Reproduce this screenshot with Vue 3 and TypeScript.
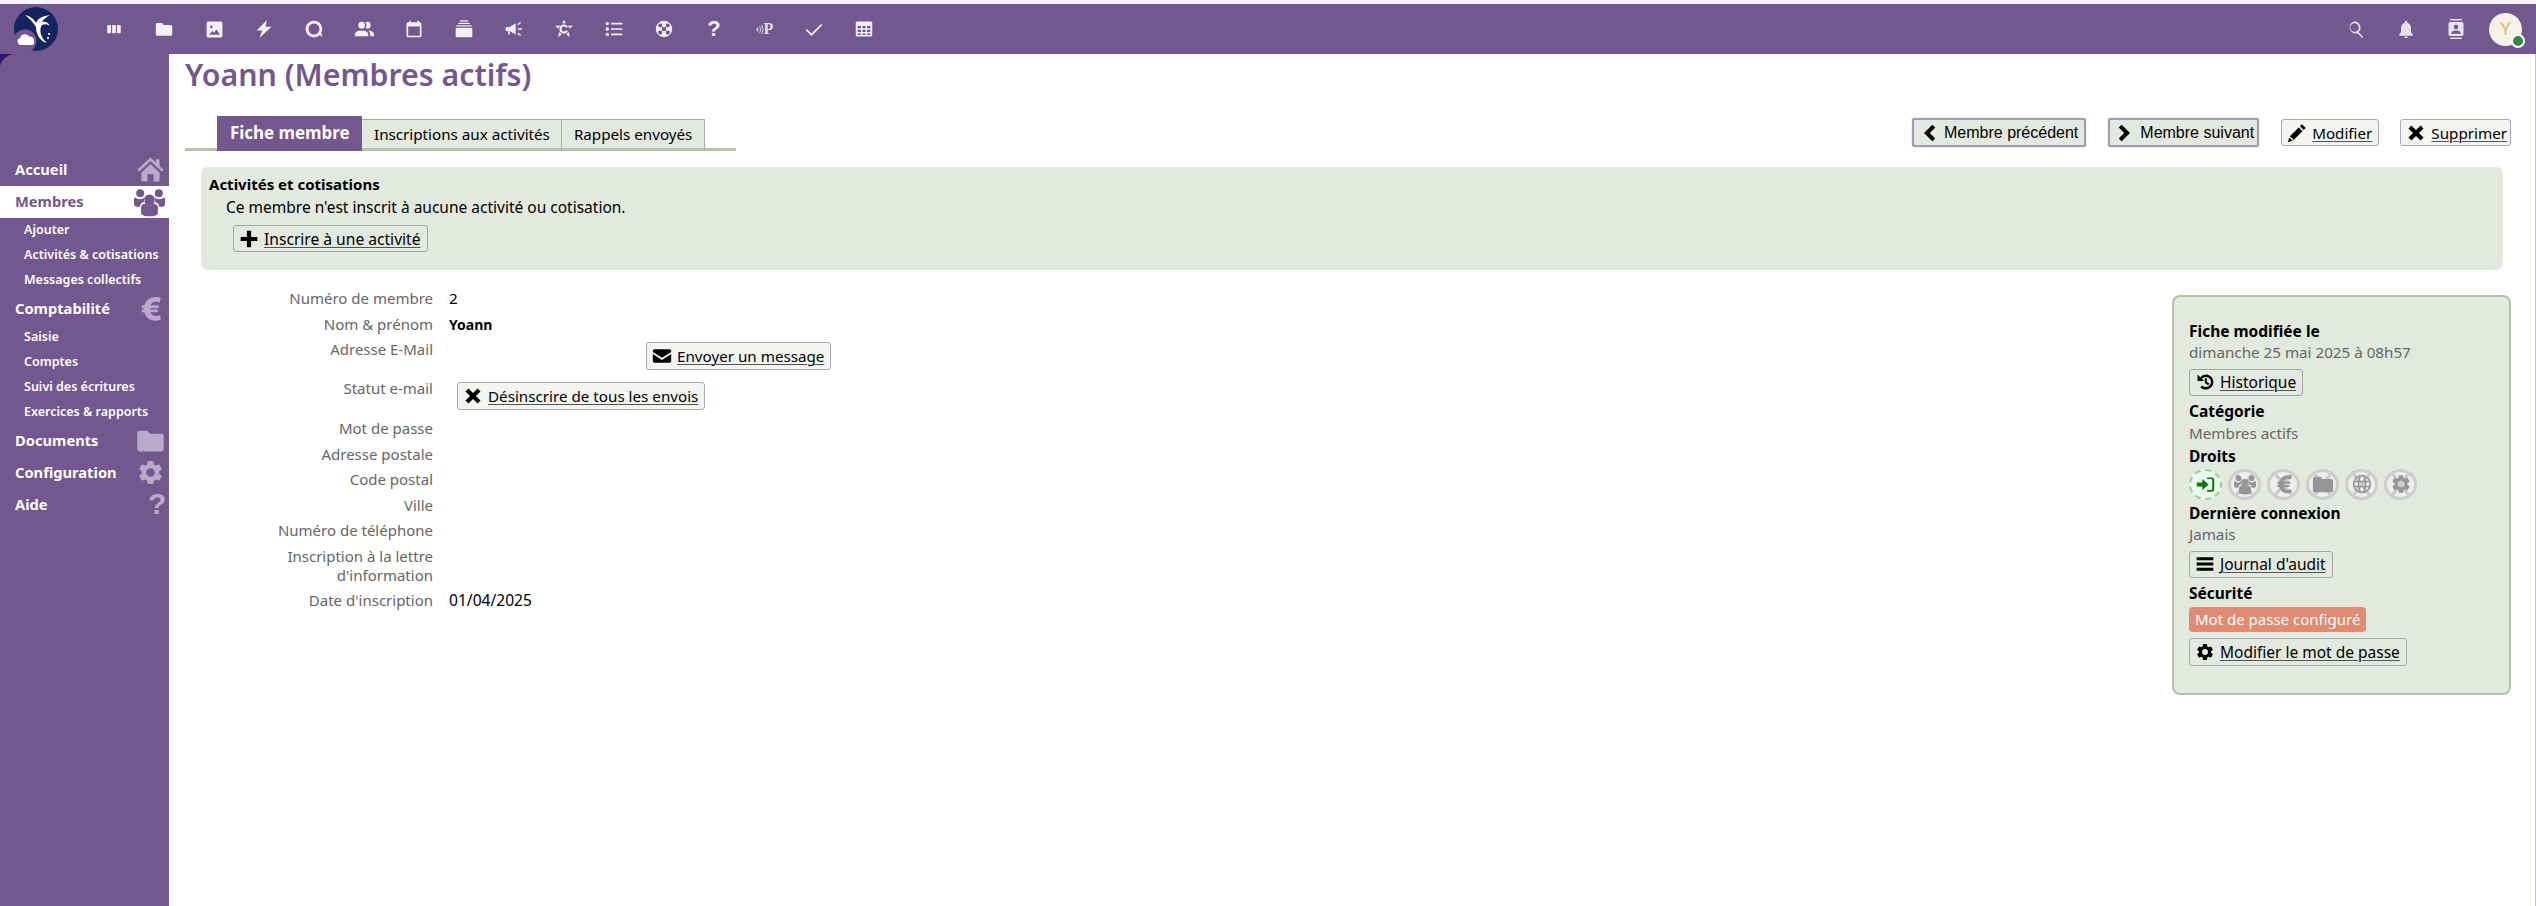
<script setup lang="ts">
const P: Record<string, string> = {
  apps: 'M4 6.500h3a1 1 0 011 1v9a1 1 0 01-1 1H4a1 1 0 01-1-1v-9a1 1 0 011-1zM10.500 6.500h3a1 1 0 011 1v9a1 1 0 01-1 1h-3a1 1 0 01-1-1v-9a1 1 0 011-1zM17 6.500h3a1 1 0 011 1v9a1 1 0 01-1 1h-3a1 1 0 01-1-1v-9a1 1 0 011-1z',
  folder: 'M3 4h6.500l2 2.500H21a2 2 0 012 2V19a2 2 0 01-2 2H3a2 2 0 01-2-2V6a2 2 0 012-2z',
  image: 'M4 2h16a2 2 0 012 2v16a2 2 0 01-2 2H4a2 2 0 01-2-2V4a2 2 0 012-2zM8 7a1.700 1.700 0 100 3.400A1.700 1.700 0 008 7zM5 18.500h14l-4.500-6.500-3.200 4.200-2-2.300z',
  flash: 'M16 0L2 14h7.500L6 24l16-15h-8z',
  talk: 'M12 2a10 10 0 107 17.100l3 2.400-1.200-5A10 10 0 0012 2zm0 3.400a6.600 6.600 0 110 13.200 6.600 6.600 0 010-13.200z',
  people: 'M16 17v2H2v-2s0-4 7-4 7 4 7 4m-3.500-9.500A3.500 3.500 0 109 11a3.500 3.500 0 003.500-3.500m3.440 5.500A5.320 5.320 0 0118 17v2h4v-2s0-3.630-6.060-4M15 4a3.390 3.390 0 00-1.930.59 5 5 0 010 5.820A3.390 3.390 0 0015 11a3.500 3.500 0 000-7z',
  calendar: 'M19 4h-1V2h-2v2H8V2H6v2H5a2 2 0 00-2 2v14a2 2 0 002 2h14a2 2 0 002-2V6a2 2 0 00-2-2zm0 16H5V9h14v11z',
  deck: 'M7 1.500h10V3H7zM5 4.500h14V6H5zM3 7.500h18V9H3zM3 10.500h18a1 1 0 011 1V22H2V11.500a1 1 0 011-1z',
  announce: 'M2 9.500h5L14 5v14l-7-4.500v4H5v-4H2zM16.500 11h5v2h-5zM16 6l3.500-2.500 1 1.400L17 7.600zM16 18l3.500 2.500 1-1.400-3.500-2.500z',
  circles: 'M12 1l2.200 4h-4.400zM1 8l6.300-.2-1.800 3.600zM23 8l-6.300-.2 1.800 3.600zM5 22l1.300-6.300 3 2.700zM19 22l-1.300-6.300-3 2.700zM12 6.500a5.500 5.500 0 104.800 8.200l-2.200-1.100A3 3 0 1112 9a3 3 0 012.600 1.400l2.200-1.100A5.500 5.500 0 0012 6.500z',
  list: 'M2 5.500a2 2 0 114 0 2 2 0 01-4 0zM2 12a2 2 0 114 0 2 2 0 01-4 0zM2 18.500a2 2 0 114 0 2 2 0 01-4 0zM8.500 4.500H22v2H8.500zM8.500 11H22v2H8.500zM8.500 17.500H22v2H8.500z',
  buoy: 'M12 1a11 11 0 100 22 11 11 0 000-22zM12 9a3 3 0 110 6 3 3 0 010-6zM7 4.500a2.700 2.700 0 110 5.400 2.700 2.700 0 010-5.400zM17 4.500a2.700 2.700 0 110 5.400 2.700 2.700 0 010-5.400zM7 14.100a2.700 2.700 0 110 5.400 2.700 2.700 0 010-5.400zM17 14.100a2.700 2.700 0 110 5.400 2.700 2.700 0 010-5.400z',
  check: 'M9 17.500L3.500 12l-1.500 1.500L9 20.500 22 7.500 20.500 6z',
  table: 'M3 2h18a2 2 0 012 2v16a2 2 0 01-2 2H3a2 2 0 01-2-2V4a2 2 0 012-2zM3.500 8v3h4.500V8zm6.500 0v3h4V8zm6 0v3h4.500V8zM3.500 13v3h4.500v-3zm6.500 0v3h4v-3zm6 0v3h4.500v-3zM3.500 18v2h4.500v-2zm6.500 0v2h4v-2zm6 0v2h4.500v-2z',
  search: 'M10 2a8 8 0 015.300 14l6.500 6.500-1.500 1.500-6.500-6.500A8 8 0 1110 2zm0 2.200a5.800 5.800 0 100 11.600 5.800 5.800 0 000-11.600z',
  bell: 'M12 23a2.500 2.500 0 002.400-2h-4.800A2.500 2.500 0 0012 23zm8-5l-2-2v-5c0-3.200-1.700-5.800-4.500-6.500V3.500a1.500 1.500 0 00-3 0v1C7.700 5.200 6 7.800 6 11v5l-2 2v2h16z',
  contact: 'M5 0h14v1.800H5zM5 22.200h14V24H5zM5 3.500h14a2 2 0 012 2v13a2 2 0 01-2 2H5a2 2 0 01-2-2v-13a2 2 0 012-2zM12 6.800a2.800 2.800 0 100 5.600 2.800 2.800 0 000-5.600zM6.500 17.800h11v-1.300c0-1.800-3.700-2.800-5.500-2.800s-5.500 1-5.500 2.800z',
  home: 'M12 2L1 12.300l1.500 1.600L12 5l9.500 8.900 1.500-1.600-3.500-3.300V3.500h-3v2.700zM4.500 14.500L12 7.500l7.500 7V22H14.500v-6h-5v6h-5z',
  users: 'M12 6.500a4.300 4.300 0 110 8.600 4.300 4.300 0 010-8.600zM4.800 2.500a3.100 3.100 0 110 6.200 3.100 3.100 0 010-6.200zM19.200 2.500a3.100 3.100 0 110 6.200 3.100 3.100 0 010-6.200zM5.500 16.500c0-2 2-2.800 3.300-2.500a5.500 5.500 0 006.400 0c1.300-.3 3.300.5 3.300 2.500V21c0 1.500-3 2.500-6.500 2.500S5.500 22.500 5.500 21zM0 9.500C0 9 1 9 1.500 9.300a5.300 5.300 0 006 0c.4.500.6 1.700 1.100 2.700-2.300.5-4 1.800-4 4H2C.5 16 0 15 0 14zM24 9.500c0-.5-1-.5-1.500-.2a5.300 5.300 0 01-6 0c-.4.500-.6 1.700-1.100 2.700 2.300.5 4 1.800 4 4H22c1.500 0 2-1 2-2z',
  euro: 'M16.500 2.500c1.500 0 3 .3 4 .7l-.8 3.800a9 9 0 00-3.200-.6c-2.200 0-3.800 1-4.500 3h7l-.5 2.300h-7v1.200h6.700l-.5 2.300H12c.7 2.100 2.400 3.100 4.600 3.100 1.200 0 2.400-.3 3.300-.7l.6 3.700a12 12 0 01-4.500.9c-4.500 0-8-2.500-9-7H4.500l.5-2.300h1.500v-1.200H4.500l.5-2.300h2c1.100-4.400 4.700-6.900 9.500-6.900z',
  gear: 'M19.140 12.940c.04-.3.06-.61.06-.94 0-.32-.02-.64-.07-.94l2.030-1.580a.49.49 0 00.12-.61l-1.920-3.320a.488.488 0 00-.59-.22l-2.390.96c-.5-.38-1.030-.7-1.620-.94l-.36-2.540a.484.484 0 00-.48-.41h-3.840c-.24 0-.43.17-.47.41l-.36 2.540c-.59.24-1.130.57-1.620.94l-2.390-.96c-.22-.08-.47 0-.59.22L2.740 8.870c-.12.21-.08.47.12.61l2.030 1.580c-.05.3-.09.63-.09.94s.02.64.07.94l-2.030 1.580a.49.49 0 00-.12.61l1.920 3.320c.12.22.37.29.59.22l2.390-.96c.5.38 1.030.7 1.620.94l.36 2.540c.05.24.24.41.48.41h3.840c.24 0 .44-.17.47-.41l.36-2.540c.59-.24 1.130-.56 1.620-.94l2.390.96c.22.08.47 0 .59-.22l1.920-3.320c.12-.22.07-.47-.12-.61l-2.010-1.580zM12 15.600A3.600 3.600 0 1112 8.400a3.600 3.600 0 010 7.200z',
  chevL: 'M16 2l3.500 3.500L13 12l6.500 6.500L16 22 6 12z',
  chevR: 'M8 2L4.500 5.500 11 12l-6.500 6.500L8 22l10-10z',
  pencil: 'M18 1.500l4.500 4.500-2.500 2.500L15.500 4zM14 5.500l4.500 4.500L8 20.500 3.500 16zM2.800 17.500l3.700 3.700L1 23z',
  cross: 'M6.500 3L12 8.500 17.500 3 21 6.500 15.500 12l5.500 5.500-3.500 3.500L12 15.500 6.500 21 3 17.500 8.500 12 3 6.500z',
  plus: 'M9.500 2h5v7.500H22v5h-7.500V22h-5v-7.500H2v-5h7.500z',
  mail: 'M3 4h18a2 2 0 012 2v1.200l-11 7-11-7V6a2 2 0 012-2zM1 9.700l11 7 11-7V18a2 2 0 01-2 2H3a2 2 0 01-2-2z',
  history: 'M13 3a9 9 0 11-6.500 15.200l2-2.100A6.100 6.100 0 1013 5.900a6 6 0 00-4.700 2.300l2.700 2.700H3V3l3.300 3.200A9 9 0 0113 3zM11.800 7.500h2.400v4.300l3 2-1.300 2-4.100-2.700z',
  bars: 'M2 4h20v3.500H2zM2 10.200h20v3.500H2zM2 16.500h20V20H2z',
  login: 'M1 9.500h7V5l8 7-8 7v-4.500H1zM14 3h6a3 3 0 013 3v12a3 3 0 01-3 3h-6v-2.200h5.500a1 1 0 001-1V6.200a1 1 0 00-1-1H14z',
  globe: 'M12 2a10 10 0 100 20 10 10 0 000-20zm0 1.500c1 0 2.300 2 2.800 5H9.200c.5-3 1.800-5 2.800-5zM9 3.900c-.6 1.100-1.100 2.700-1.400 4.600H4.500A8.500 8.500 0 019 3.900zm6 0a8.500 8.500 0 014.500 4.600h-3.100c-.3-1.900-.8-3.500-1.400-4.600zM4 10h3.400v4H4zm5 0h6v4H9zm7.600 0H20v4h-3.400zM4.500 15.500h3.100c.3 1.900.8 3.500 1.400 4.600a8.500 8.500 0 01-4.500-4.600zm4.700 0h5.600c-.5 3-1.800 5-2.800 5s-2.300-2-2.800-5zm7.200 0h3.100a8.500 8.500 0 01-4.500 4.600c.6-1.100 1.100-2.700 1.400-4.600z',
}

const topIcons = ['apps', 'folder', 'image', 'flash', 'talk', 'people', 'calendar', 'deck', 'announce', 'circles', 'list', 'buoy', 'help', 'passman', 'check', 'table']

interface NavItem { label: string; icon: string; active?: boolean; subs?: string[] }
const nav: NavItem[] = [
  { label: 'Accueil', icon: 'home' },
  { label: 'Membres', icon: 'users', active: true, subs: ['Ajouter', 'Activités & cotisations', 'Messages collectifs'] },
  { label: 'Comptabilité', icon: 'euro', subs: ['Saisie', 'Comptes', 'Suivi des écritures', 'Exercices & rapports'] },
  { label: 'Documents', icon: 'folder' },
  { label: 'Configuration', icon: 'gear' },
  { label: 'Aide', icon: 'help' },
]

const emptyFields = ['Adresse postale', 'Code postal', 'Ville', 'Numéro de téléphone', 'Inscription à la lettre d\'information']
const rights = ['users', 'euro', 'folder', 'globe', 'gear']
</script>

<template>
  <div class="page">
    <div class="strip"></div>
    <header class="topbar">
      <a class="logo">
        <svg viewBox="0 0 44 44" width="44" height="44">
          <circle cx="22" cy="22" r="22" fill="#13255f" />
          <circle cx="11" cy="34" r="11.500" fill="#73578f" />
          <path d="M11 8C16 9 20 12 22 16 24 11 29 9 36 8 31 11 29 13 28 15 31 14 34 15 36 19 33 17 31 17 28 18 25 22 26 30 33 36 27 35 22 28 22 20 19 15 15 11 11 8z" fill="#fff" />
          <path d="M7 38a3.500 3.500 0 01-.8-6.900 4.800 4.800 0 018.800-1.600 4.200 4.200 0 015 4.500A3.300 3.300 0 0118.500 38z" fill="#fff" />
          <circle cx="35" cy="27" r="1.100" fill="#fff" /><circle cx="34" cy="31" r="1.100" fill="#fff" />
        </svg>
      </a>
      <nav class="top-apps">
        <span v-for="t in topIcons" :key="t" class="top-app" :class="'ta-' + t">
          <span v-if="t === 'help'" class="glyph-help">?</span>
          <span v-else-if="t === 'passman'" class="glyph-pass">
            <svg viewBox="0 0 10 12" width="9" height="11"><path d="M1 6h2M2.500 3.500q2 2.500 0 5M5 2q3 4 0 8M7.500 1q3 5 0 10" fill="none" stroke="#e4dfeb" stroke-width="1" /></svg>P
          </span>
          <svg v-else viewBox="0 0 24 24"><path :d="P[t]" fill-rule="evenodd" /></svg>
        </span>
      </nav>
      <div class="top-right">
        <span class="top-ico search"><svg viewBox="0 0 24 24"><path :d="P.search" fill-rule="evenodd" /></svg></span>
        <span class="top-ico"><svg viewBox="0 0 24 24"><path :d="P.bell" /></svg></span>
        <span class="top-ico"><svg viewBox="0 0 24 24"><path :d="P.contact" fill-rule="evenodd" /></svg></span>
        <span class="avatar">Y<i class="status"></i></span>
      </div>
    </header>

    <div class="body">
      <aside class="sidebar">
        <svg class="corner" viewBox="0 0 14 12" width="14" height="12"><path d="M0 0h14C7 1 2 5 0 12z" fill="#2a1a6e" /></svg>
        <ul class="menu">
          <li v-for="n in nav" :key="n.label">
            <a class="menu-item" :class="{ active: n.active }">
              <span>{{ n.label }}</span>
              <span v-if="n.icon === 'help'" class="menu-help">?</span>
              <svg v-else class="menu-ico" viewBox="0 0 24 24"><path :d="P[n.icon]" fill-rule="evenodd" /></svg>
            </a>
            <ul v-if="n.subs" class="submenu">
              <li v-for="s in n.subs" :key="s">{{ s }}</li>
            </ul>
          </li>
        </ul>
      </aside>

      <main class="main">
        <h1 class="title">Yoann (Membres actifs)</h1>
        <div class="tabbar">
          <ul class="tabs">
            <li class="tab current">Fiche membre</li>
            <li class="tab">Inscriptions aux activités</li>
            <li class="tab">Rappels envoyés</li>
          </ul>
          <div class="actions">
            <a class="btn strong"><svg viewBox="0 0 24 24"><path :d="P.chevL" /></svg>Membre précédent</a>
            <a class="btn strong next"><svg viewBox="0 0 24 24"><path :d="P.chevR" /></svg>Membre suivant</a>
            <a class="btn light modifier"><svg viewBox="0 0 24 24"><path :d="P.pencil" /></svg><u>Modifier</u></a>
            <a class="btn light suppr"><svg viewBox="0 0 24 24"><path :d="P.cross" /></svg><u>Supprimer</u></a>
          </div>
        </div>

        <section class="activities">
          <h3>Activités et cotisations</h3>
          <p>Ce membre n'est inscrit à aucune activité ou cotisation.</p>
          <a class="btn"><svg viewBox="0 0 24 24"><path :d="P.plus" /></svg><u>Inscrire à une activité</u></a>
        </section>

        <div class="columns">
          <dl class="fields">
            <div class="row"><dt>Numéro de membre</dt><dd>2</dd></div>
            <div class="row"><dt>Nom &amp; prénom</dt><dd class="strongv">Yoann</dd></div>
            <div class="row email">
              <dt>Adresse E-Mail</dt>
              <dd><a class="btn light mailbtn"><svg viewBox="0 0 24 24"><path :d="P.mail" /></svg><u>Envoyer un message</u></a></dd>
            </div>
            <div class="row status-row">
              <dt>Statut e-mail</dt>
              <dd><a class="btn light unsub"><svg viewBox="0 0 24 24"><path :d="P.cross" /></svg><u>Désinscrire de tous les envois</u></a></dd>
            </div>
            <div class="row"><dt>Mot de passe</dt><dd></dd></div>
            <div v-for="f in emptyFields" :key="f" class="row"><dt>{{ f }}</dt><dd></dd></div>
            <div class="row"><dt>Date d'inscription</dt><dd class="date">01/04/2025</dd></div>
          </dl>

          <aside class="infos">
            <h4>Fiche modifiée le</h4>
            <p>dimanche 25 mai 2025 à 08h57</p>
            <a class="btn"><svg viewBox="0 0 24 24"><path :d="P.history" fill-rule="evenodd" /></svg><u>Historique</u></a>
            <h4 class="gap">Catégorie</h4>
            <p class="cat">Membres actifs</p>
            <h4>Droits</h4>
            <div class="rights">
              <span class="right ok"><svg viewBox="0 0 24 24"><path :d="P.login" /></svg></span>
              <span v-for="r in rights" :key="r" class="right no">
                <svg class="xmark" viewBox="0 0 33 31"><path d="M7 3l19 25M26 3L7 28" stroke="#c9c9c9" stroke-width="3" /></svg>
                <svg class="rico" viewBox="0 0 24 24"><path :d="P[r]" fill-rule="evenodd" /></svg>
              </span>
            </div>
            <h4>Dernière connexion</h4>
            <p>Jamais</p>
            <a class="btn"><svg viewBox="0 0 24 24"><path :d="P.bars" /></svg><u>Journal d'audit</u></a>
            <h4 class="gap">Sécurité</h4>
            <span class="badge">Mot de passe configuré</span>
            <a class="btn"><svg viewBox="0 0 24 24"><path :d="P.gear" fill-rule="evenodd" /></svg><u>Modifier le mot de passe</u></a>
          </aside>
        </div>
      </main>
    </div>
  </div>
</template>

<style>
html, body { margin: 0; background: #fff; }
</style>

<style scoped>
.page {
  width: 2536px;
  height: 906px;
  overflow: hidden;
  display: flex;
  flex-direction: column;
  font-family: "Noto Sans", "DejaVu Sans", sans-serif;
  font-size: 15.200px;
  color: #000;
}
ul, dl, dd, p, h1, h3, h4 { margin: 0; padding: 0; list-style: none; }
.strip { height: 4px; background: #f4f4f6; flex: none; }

.topbar {
  flex: none;
  height: 50px;
  background: #73578f;
  display: flex;
  align-items: center;
}
.logo { width: 44px; height: 44px; margin: 0 0 0 14px; flex: none; display: block; }
.top-apps { display: flex; margin-left: 31px; }
.top-app {
  width: 50px;
  height: 50px;
  display: flex;
  align-items: center;
  justify-content: center;
}
.top-app svg { width: 20px; height: 20px; fill: #f4f0f7; }
.top-app.ta-apps svg { width: 18px; height: 18px; }
.top-app.ta-folder svg { width: 18px; height: 18px; }
.top-app.ta-people svg { width: 23px; height: 23px; }
.top-app.ta-flash svg { width: 18px; height: 18px; }
.top-app.ta-buoy svg { width: 18px; height: 18px; }
.top-app.ta-table svg { width: 18px; height: 18px; }
.top-app.ta-image svg { width: 19px; height: 19px; }
.glyph-help { font: bold 22px "Liberation Sans", sans-serif; color: #f4f0f7; }
.glyph-pass { font: bold 16px "Liberation Serif", serif; color: #e4dfeb; display: flex; align-items: center; }
.top-app .glyph-pass svg { width: 9px; height: 11px; fill: none; }
.top-right { margin-left: auto; display: flex; align-items: center; padding-right: 14px; }
.top-ico { width: 50px; height: 50px; display: flex; align-items: center; justify-content: center; }
.top-ico svg { width: 20px; height: 20px; fill: #e7e1ee; }
.top-ico.search svg { width: 18px; height: 18px; }
.avatar {
  position: relative;
  width: 33px;
  height: 33px;
  margin-left: 8px;
  border-radius: 50%;
  background: #f7f2e6;
  color: #d8b770;
  font: 18px/33px "Liberation Sans", sans-serif;
  text-align: center;
}
.status {
  position: absolute;
  right: -3px;
  bottom: -2px;
  width: 10px;
  height: 10px;
  border-radius: 50%;
  background: #2c8a44;
  border: 2px solid #fff;
}

.body { flex: 1; display: flex; min-height: 0; }
.sidebar {
  position: relative;
  width: 169px;
  flex: none;
  background: #73578f;
  padding-top: 100px;
  box-sizing: border-box;
}
.corner { position: absolute; left: 0; top: 0; }
.menu-item {
  height: 32px;
  box-sizing: border-box;
  display: flex;
  align-items: center;
  justify-content: space-between;
  padding: 0 4px 2px 15px;
  color: #fff;
  font-weight: 700;
  font-size: 14.700px;
}
.menu-item.active { background: #fff; color: #73578f; }
.menu-ico { width: 29px; height: 29px; fill: #b9aac9; flex: none; }
.menu-item.active .menu-ico { fill: #73578f; width: 31px; height: 31px; margin-right: 0; }
.menu-help { font: bold 30px "Liberation Sans", sans-serif; color: #b9aac9; width: 17px; }
.submenu li {
  height: 25px;
  line-height: 24px;
  padding-left: 24px;
  font-size: 12.500px;
  font-weight: 600;
  color: #fff;
  white-space: nowrap;
}

.main {
  flex: 1;
  min-width: 0;
  padding: 0 24px 0 16px;
  border-right: 1px solid #c3bcd6;
}
.title {
  height: 40px;
  font-size: 30.300px;
  line-height: 41px;
  font-weight: 600;
  color: #73578f;
}
.tabbar {
  margin-top: 22px;
  display: flex;
  justify-content: space-between;
  align-items: flex-start;
}
.tabs {
  width: 551px;
  height: 35px;
  box-sizing: border-box;
  padding-left: 32px;
  display: flex;
  align-items: flex-end;
  background: linear-gradient(#b5c2a5, #b5c2a5) bottom / 100% 3px no-repeat;
}
.tab {
  height: 32px;
  box-sizing: border-box;
  line-height: 28px;
  padding: 0 11.500px;
  background: #e3e9de;
  border: 1px solid #aaa;
  border-left-width: 0;
  border-bottom: 3px solid #b5c2a5;
  white-space: nowrap;
}
.tab.current {
  height: 35px;
  line-height: 33px;
  background: #73578f;
  color: #fff;
  font-weight: 700;
  font-size: 16.900px;
  padding: 0 13px;
  border: 0;
}

.actions { display: flex; align-items: center; margin-top: 2px; }
.btn {
  display: inline-flex;
  align-items: center;
  box-sizing: border-box;
  height: 27px;
  padding: 0 6px 0 5px;
  gap: 5px;
  background: #e3e9de;
  border: 1px solid #a5a5a5;
  border-radius: 3px;
  color: #000;
  white-space: nowrap;
}
.btn svg { width: 20px; height: 20px; fill: #000; flex: none; }
.btn u { text-decoration-thickness: 1px; text-underline-offset: 2px; text-decoration-color: #555; }
.btn.light { background: #f3f5f1; border-color: #aaa6bb; }
.btn.strong {
  height: 29px;
  border: 2px solid #a49ab4;
  font-family: "Liberation Sans", sans-serif;
  font-size: 16px;
  box-shadow: 0 0 1px #73578f;
  padding: 0 6px 0 5px;
}
.btn.strong.next { margin-left: 22px; padding-right: 3px; }
.modifier { margin-left: 22px; }
.btn.suppr { margin-left: 21px; padding-right: 3px; }

.activities {
  margin: 16px 8px 0 16px;
  height: 103px;
  box-sizing: border-box;
  background: #e3e9de;
  border-radius: 7px;
  padding: 8px 8px;
}
.activities h3 { font-size: 15px; font-weight: 700; line-height: 19px; }
.activities p { margin: 4px 0 0 17px; line-height: 19px; font-size: 15.500px; }
.activities .btn { margin: 8px 0 0 24px; font-size: 15.600px; }

.columns {
  display: flex;
  justify-content: space-between;
  align-items: flex-start;
  margin-top: 16px;
}
.fields { margin-left: 48px; }
.row { display: flex; padding: 3px 0 3.500px; }
.row dt { width: 200px; text-align: right; line-height: 19px; color: #666; flex: none; font-size: 15px; }
.row dd { margin-left: 16px; line-height: 19px; }
.row dd.strongv { font-weight: 700; font-size: 14px; }
.row dd.date { font-size: 15.600px; }
.email { height: 32.500px; }
.row.email dd { margin-left: 213px; padding-top: 2px; }
.status-row { height: 33.500px; }
.row.status-row dd { margin-left: 24px; padding-top: 3px; }
.btn.mailbtn, .btn.unsub { height: 28px; }

.infos {
  margin-top: 8.500px;
  width: 339px;
  height: 400px;
  box-sizing: border-box;
  background: #e3e9de;
  border: 2px solid #b5c2a5;
  border-radius: 8px;
  padding: 24px 15px 0;
}
.infos h4 { font-size: 15.500px; font-weight: 700; line-height: 20px; }
.infos p { color: #666; line-height: 22px; }
.infos p.cat { line-height: 25px; }
.infos .btn { display: flex; width: fit-content; margin-top: 6px; font-size: 15.500px; }
.infos h4.gap { margin-top: 5px; }
.rights { display: flex; gap: 6px; margin: 3px 0 3px; }
.right {
  position: relative;
  width: 33px;
  height: 31px;
  box-sizing: border-box;
  border-radius: 50%;
  display: flex;
  align-items: center;
  justify-content: center;
}
.right.ok { background: #ecf9ea; border: 2px dashed #8ed59c; }
.right.ok svg { width: 19px; height: 19px; fill: #0a7a0a; }
.right.no { background: #eeeeee; border: 3px solid #cdcdcd; overflow: hidden; }
.xmark { position: absolute; left: -3px; top: -3px; width: 33px; height: 31px; }
.rico { position: relative; width: 22px; height: 22px; fill: #969696; }
.badge {
  display: block;
  width: fit-content;
  margin-top: 4px;
  height: 25px;
  line-height: 25px;
  padding: 0 6px;
  background: #e08b72;
  color: #fff;
  border-radius: 4px;
  font-size: 15px;
}
.infos .badge + .btn { height: 28px; }
</style>
